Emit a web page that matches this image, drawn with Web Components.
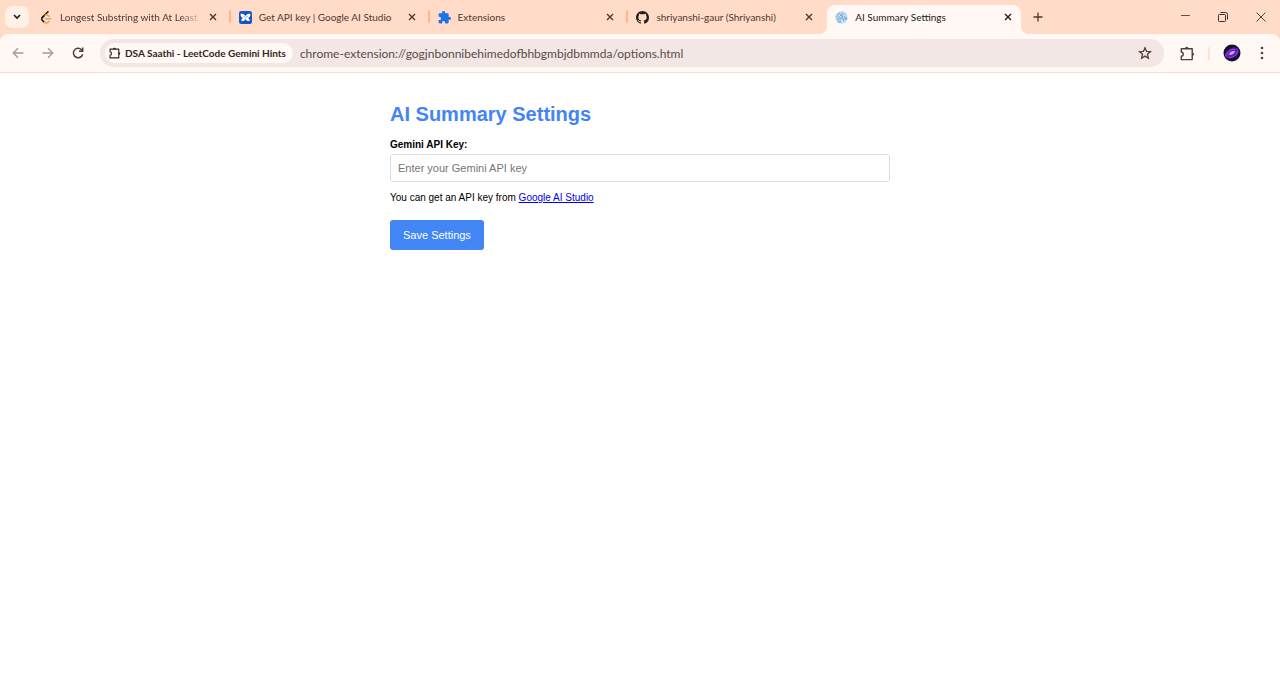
<!DOCTYPE html>
<html lang="en">
<head>
<meta charset="utf-8">
<title>AI Summary Settings</title>
<style>
  html, body { margin: 0; min-height: 100%; background: #fff; }
  body { font-family: Lato, "Open Sans", sans-serif; font-size: 10px; }
</style>
</head>
<body>
<browser-window>
  <tab-strip slot="tabs">
    <browser-tab label="Longest Substring with At Least" divider faded>
      <svg slot="icon" viewBox="0 0 14 14" fill="none" stroke-linecap="round" stroke-linejoin="round" stroke-width="1.6"><path d="M8.600 .8 2.300 7" stroke="#161616"/><path d="M5 4.500 2.300 7.200Q1.300 8.600 2.300 9.800L4.700 12.200" stroke="#161616"/><path d="M4.700 12.200Q7 13.600 8.700 12.200L9.800 11" stroke="#f5a623"/><path d="M5.400 4.400Q7.200 3.400 8.700 4.700L9.800 5.700" stroke="#f5a623"/><path d="M5.800 8.300H11.500" stroke="#b9b0a8"/></svg>
    </browser-tab>
    <browser-tab label="Get API key | Google AI Studio" divider>
      <svg slot="icon" viewBox="0 0 14 14"><rect width="14" height="14" rx="2.500" fill="#1256c4"/><path fill="#fff" d="M1.700 3.200C4 2.300 6 3.600 7 5.500 8 3.600 10 2.300 12.300 3.200 12.500 5.500 11.500 7 9.600 7.500 11.100 8 11.700 9.300 11.400 10.700 9.400 11.300 7.700 10.200 7 8.600 6.300 10.200 4.600 11.300 2.600 10.700 2.300 9.300 2.900 8 4.400 7.500 2.500 7 1.500 5.500 1.700 3.200Z"/><path d="M4.500 5.200 6.300 7M9.500 5.200 7.700 7" stroke="#1256c4" stroke-width=".6"/></svg>
    </browser-tab>
    <browser-tab label="Extensions" divider>
      <svg slot="icon" viewBox="1 1 22 22"><path fill="#1a73e8" d="M20.500 11H19V7c0-1.100-.9-2-2-2h-4V3.500a2.500 2.500 0 0 0-5 0V5H4c-1.100 0-2 .9-2 2v3.800h1.500a2.700 2.700 0 0 1 0 5.400H2V20c0 1.100.9 2 2 2h3.800v-1.500a2.700 2.700 0 0 1 5.400 0V22H17c1.100 0 2-.9 2-2v-4h1.500a2.500 2.500 0 0 0 0-5Z"/></svg>
    </browser-tab>
    <browser-tab label="shriyanshi-gaur (Shriyanshi)">
      <svg slot="icon" viewBox="0 0 16 16"><path fill="#24211f" d="M8 0C3.580 0 0 3.580 0 8c0 3.540 2.290 6.530 5.470 7.590.4.070.55-.17.55-.38 0-.19-.01-.82-.01-1.490-2.010.37-2.530-.49-2.690-.94-.09-.23-.48-.94-.82-1.130-.28-.15-.68-.52-.01-.53.63-.01 1.080.58 1.230.82.72 1.210 1.870.87 2.330.66.070-.52.28-.87.51-1.070-1.780-.2-3.640-.89-3.640-3.950 0-.87.31-1.590.82-2.150-.08-.2-.36-1.020.08-2.120 0 0 .67-.21 2.200.82.64-.18 1.320-.27 2-.27s1.360.09 2 .27c1.530-1.040 2.200-.82 2.200-.82.44 1.100.16 1.920.08 2.120.51.56.82 1.270.82 2.150 0 3.070-1.870 3.750-3.650 3.950.29.25.54.73.54 1.480 0 1.070-.01 1.930-.01 2.200 0 .21.15.46.55.38A8.010 8.010 0 0 0 16 8c0-4.420-3.580-8-8-8Z"/></svg>
    </browser-tab>
    <browser-tab label="AI Summary Settings" active>
      <svg slot="icon" viewBox="0 0 14 14"><circle cx="7" cy="7" r="6.700" fill="#b8d9f4"/><path d="M1.500 7 5 1.800M2.600 10 7 3.200M5 10.500 7.500 6M8 2.500 12.500 9M7 4 9.500 11M10 8.500 13 8M3 12 6.500 11.500" fill="none" stroke="#5f91c4" stroke-width=".8"/><path d="M4 4.500 6 6M9 5 11 5M6.800 9 8.500 12.500" stroke="#e9f6ff" stroke-width="1"/></svg>
    </browser-tab>
  </tab-strip>
  <browser-toolbar slot="toolbar" extension="DSA Saathi - LeetCode Gemini Hints" url="chrome-extension://gogjnbonnibehimedofbhbgmbjdbmmda/options.html"></browser-toolbar>
  <settings-form heading="AI Summary Settings"></settings-form>
</browser-window>

<script>
const define = (name, html, setup) => {
  const template = document.createElement('template');
  template.innerHTML = html;
  customElements.define(name, class extends HTMLElement {
    constructor() {
      super();
      this.attachShadow({ mode: 'open' }).append(template.content.cloneNode(true));
    }
    connectedCallback() { if (setup) setup(this, this.shadowRoot); }
  });
};

const buttonReset = `
  button { display: flex; align-items: center; justify-content: center; border: 0; padding: 0; background: none; color: inherit; font: inherit; }
  svg { display: block; flex: none; }`;

const puzzle = size => `<svg width="${size}" height="${size}" viewBox="0 0 14 14" fill="none" stroke="currentColor" stroke-width="1.300" stroke-linejoin="round"><path d="M1.200 2.500H11.400V12.700H1.200V9.600C3.600 9.500 3.600 5.700 1.200 5.600Z"/><path d="M4.700 2.500A1.600 1.700 0 0 1 7.900 2.500ZM11.400 6A1.700 1.600 0 0 1 11.400 9.200Z" fill="currentColor" stroke="none"/></svg>`;

define('browser-window', `
  <style>
    :host { display: flex; flex-direction: column; }
  </style>
  <slot name="tabs"></slot>
  <slot name="toolbar"></slot>
  <main><slot></slot></main>`);

define('tab-strip', `
  <style>
    :host { display: flex; height: 34px; background: #ffdbc8; color: #4f382e; }
    ${buttonReset}
    .search { width: 24px; height: 22px; margin: 6px 3px 0 5px; border-radius: 7px; background: #fff0e8; color: #201a18; }
    .tabs { display: flex; flex: 1; min-width: 0; }
    .new { width: 24px; }
    .drag { flex: 0 1 116px; }
    .controls { display: flex; color: #3b2f2a; }
    .controls button { width: 38px; height: 33px; }
  </style>
  <button class="search" aria-label="Search tabs"><svg width="8" height="6" viewBox="0 0 8 6" fill="none" stroke="currentColor" stroke-width="1.600"><path d="M1 1 4 4 7 1"/></svg></button>
  <div class="tabs"><slot></slot></div>
  <button class="new" aria-label="New tab"><svg width="10" height="10" viewBox="0 0 10 10" stroke="currentColor" stroke-width="1.300"><path d="M5 .5V9.500M.5 5H9.500"/></svg></button>
  <div class="drag"></div>
  <div class="controls">
    <button aria-label="Minimize"><svg width="10" height="10" viewBox="0 0 10 10" stroke="currentColor" stroke-width=".8"><path d="M1 3.500H10"/></svg></button>
    <button aria-label="Restore"><svg width="10" height="10" viewBox="0 0 10 10" fill="none" stroke="currentColor"><rect x=".5" y="2.500" width="7" height="7" rx=".8"/><path d="M2.500 .5H7.500Q9.500 .5 9.500 2.500V7.500"/></svg></button>
    <button aria-label="Close window"><svg width="10" height="10" viewBox="0 0 10 10" stroke="currentColor" stroke-width=".9"><path d="M.5 .5 9.500 9.500M9.500 .5 .5 9.500"/></svg></button>
  </div>`);

define('browser-tab', `
  <style>
    :host { display: block; flex: 1 1 0; min-width: 0; box-sizing: border-box; padding: 5px 5px 0 0; position: relative; }
    ${buttonReset}
    .tab { display: flex; align-items: center; height: 29px; box-sizing: border-box; padding: 0 9px 5px 8px; border-radius: 8px 8px 0 0; position: relative; }
    ::slotted(svg) { display: block; flex: none; width: 13px; height: 13px; }
    .label { flex: 1; min-width: 0; margin: 0 8px 0 7px; line-height: 16px; white-space: nowrap; overflow: hidden; }
    :host([faded]) .label { -webkit-mask-image: linear-gradient(to left, transparent, #000 20px); mask-image: linear-gradient(to left, transparent, #000 20px); }
    :host([divider])::after { content: ""; position: absolute; right: 0; top: 10px; width: 2px; height: 13px; border-radius: 1px; background: #ffb68e; }
    :host([active]) .tab { background: #fff8f4; color: #201a18; }
    :host([active]) .tab::before, :host([active]) .tab::after { content: ""; position: absolute; bottom: 0; width: 8px; height: 8px; }
    :host([active]) .tab::before { right: 100%; background: radial-gradient(circle at 0 0, transparent 8px, #fff8f4 8px); }
    :host([active]) .tab::after { left: 100%; background: radial-gradient(circle at 100% 0, transparent 8px, #fff8f4 8px); }
  </style>
  <div class="tab">
    <slot name="icon"></slot>
    <span class="label"></span>
    <button aria-label="Close tab"><svg width="8" height="8" viewBox="0 0 8 8" stroke="currentColor" stroke-width="1.400"><path d="M1 1 7 7M7 1 1 7"/></svg></button>
  </div>`, (host, root) => {
    root.querySelector('.label').textContent = host.getAttribute('label');
  });

define('browser-toolbar', `
  <style>
    :host { display: block; background: #ffdbc8; color: #4f403a; }
    ${buttonReset}
    .bar { display: flex; align-items: center; height: 38px; background: #fff8f4; border-radius: 8px 8px 0 0; border-bottom: 1px solid #f5ddd3; padding: 0 4px 0 3px; }
    .nav { width: 30px; height: 28px; }
    .off { color: #a39994; }
    .omnibox { display: flex; align-items: center; flex: 1; min-width: 0; height: 28px; box-sizing: border-box; border-radius: 14px; background: #f2e7e5; margin: 0 8px 0 7px; padding: 0 7px 0 5px; }
    .chip { flex: none; display: flex; gap: 4px; height: 20px; padding: 0 7px 0 4px; border-radius: 10px; background: #fff8f4; color: #302622; font-weight: 700; white-space: nowrap; }
    input { flex: 1; min-width: 0; height: 20px; padding: 0; margin: 0 8px 0 7px; border: 0; outline: 0; background: none; color: #5a4b46; font: inherit; font-size: 12px; }
    .star { width: 24px; height: 24px; }
    .sep { width: 2px; height: 13px; margin: 0 6px; border-radius: 1px; background: #ffe2d3; }
    .avatar { width: 32px; }
    .menu { width: 28px; }
  </style>
  <div class="bar">
    <button class="nav off" aria-label="Back"><svg width="12" height="12" viewBox="0 0 12 12" fill="none" stroke="currentColor" stroke-width="1.300"><path d="M11.500 6H1.500M6 1.300 1.300 6 6 10.700"/></svg></button>
    <button class="nav off" aria-label="Forward"><svg width="12" height="12" viewBox="0 0 12 12" fill="none" stroke="currentColor" stroke-width="1.300"><path d="M.5 6H10.500M6 1.300 10.700 6 6 10.700"/></svg></button>
    <button class="nav" aria-label="Reload"><svg width="12" height="12" viewBox="0 0 12 12" fill="none" stroke="currentColor" stroke-width="1.500"><path d="M10.700 7.200A4.700 4.700 0 1 1 9.400 2.600L10.600 3.800M10.700 .5V4.300H6.900"/></svg></button>
    <div class="omnibox">
      <button class="chip">${puzzle(12)}<span></span></button>
      <input type="text" aria-label="Address">
      <button class="star" aria-label="Bookmark this page"><svg width="14" height="14" viewBox="0 0 14 14" fill="none" stroke="currentColor" stroke-width="1.300" stroke-linejoin="miter"><path d="M7 1.800 8.600 5.400 12.500 5.700 9.500 8.300 10.400 12.200 7 10.100 3.600 12.200 4.500 8.300 1.500 5.700 5.400 5.400Z"/></svg></button>
    </div>
    <button class="nav" aria-label="Extensions">${puzzle(15)}</button>
    <span class="sep"></span>
    <button class="avatar" aria-label="Profile"><svg width="18" height="18" viewBox="0 0 18 18"><circle cx="9" cy="9" r="8.500" fill="#1a1028"/><ellipse cx="9" cy="9" rx="7.500" ry="4.600" transform="rotate(-28 9 9)" fill="#5a1fb5"/><path d="M3 12C4 7 8 5 12 5.500M6 13.500C10 14 14 11 14.500 7M5.500 10.500C7 7.500 10 7 12 7.500" fill="none" stroke="#9345ee"/><ellipse cx="9" cy="9" rx="3" ry="1.300" transform="rotate(-28 9 9)" fill="#e39bf3"/></svg></button>
    <button class="menu" aria-label="Menu"><svg width="4" height="14" viewBox="0 0 4 14" fill="currentColor"><circle cx="2" cy="2" r="1.300"/><circle cx="2" cy="7" r="1.300"/><circle cx="2" cy="12" r="1.300"/></svg></button>
  </div>`, (host, root) => {
    root.querySelector('.chip span').textContent = host.getAttribute('extension');
    root.querySelector('input').value = host.getAttribute('url');
  });

define('settings-form', `
  <style>
    :host { display: block; box-sizing: border-box; max-width: 532px; margin: 0 auto; padding: 28px 16px; color: #000; font-family: "Liberation Sans", Arial, sans-serif; font-size: 10px; }
    h1 { margin: 0 0 12px; color: #4285f4; font-size: 20px; line-height: 26px; }
    label { display: block; margin-bottom: 3px; font-weight: 700; line-height: 12px; }
    input { display: block; width: 100%; height: 28px; box-sizing: border-box; padding: 0 7px; border: 1px solid #ddd; border-radius: 3px; background: #fff; color: #000; font: inherit; font-size: 11px; }
    input::placeholder { color: #757575; }
    p { margin: 10px 0 16px; line-height: 12px; }
    a { color: #0000ee; }
    button { height: 30px; padding: 0 13px; border: 0; border-radius: 3px; background: #4285f4; color: #fff; font: inherit; font-size: 11px; }
  </style>
  <h1></h1>
  <form>
    <label for="key">Gemini API Key:</label>
    <input id="key" type="text" placeholder="Enter your Gemini API key">
    <p>You can get an API key from <a href="#">Google AI Studio</a></p>
    <button type="button">Save Settings</button>
  </form>`, (host, root) => {
    root.querySelector('h1').textContent = host.getAttribute('heading');
  });
</script>
</body>
</html>
